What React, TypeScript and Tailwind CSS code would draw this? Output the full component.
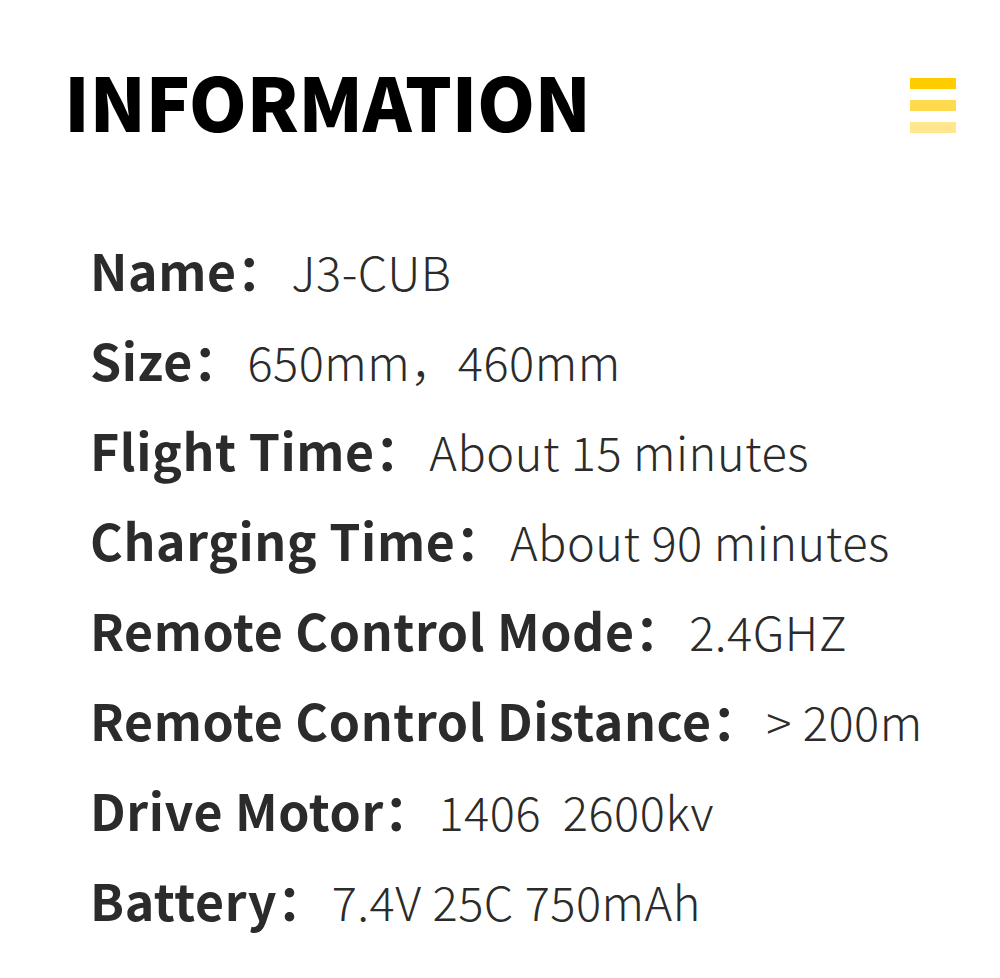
const specs = [
  { label: 'Name', value: 'J3-CUB' },
  { label: 'Size', value: '650mm，460mm' },
  { label: 'Flight Time', value: 'About 15 minutes' },
  { label: 'Charging Time', value: 'About 90 minutes' },
  { label: 'Remote Control Mode', value: '2.4GHZ' },
  { label: 'Remote Control Distance', value: '> 200m' },
  { label: 'Drive Motor', value: '1406  2600kv' },
  { label: 'Battery', value: '7.4V 25C 750mAh' },
];

function MenuIcon() {
  return (
    <div className="flex flex-col gap-[11px] w-[46px] mt-[23px]">
      <div className="h-[11px] bg-[#ffcc00]"></div>
      <div className="h-[11px] bg-[#ffda4f]"></div>
      <div className="h-[11px] bg-[#ffe68f]"></div>
    </div>
  );
}

export default function App() {
  return (
    <div
      className="w-[1000px] h-[978px] bg-white overflow-hidden"
      style={{ fontFamily: '"Noto Sans CJK SC", "Noto Sans", sans-serif' }}
    >
      <div className="flex justify-between items-start pl-[64px] pr-[44px] pt-[55px]">
        <h1 className="text-[74px] leading-[90px] font-black text-black tracking-[-0.5px]">INFORMATION</h1>
        <MenuIcon />
      </div>

      <div className="pl-[90px] pt-[79px]">
        {specs.map((s) => (
          <div key={s.label} className="flex items-baseline h-[90px] leading-[90px] whitespace-pre">
            <span className="text-[50px] font-bold text-[#2b2b2b] tracking-[0.6px]">{s.label}：</span>
            <span className="text-[47px] font-light text-[#2b2b2b] tracking-[0.5px] ml-[4px]">{s.value}</span>
          </div>
        ))}
      </div>
    </div>
  );
}
